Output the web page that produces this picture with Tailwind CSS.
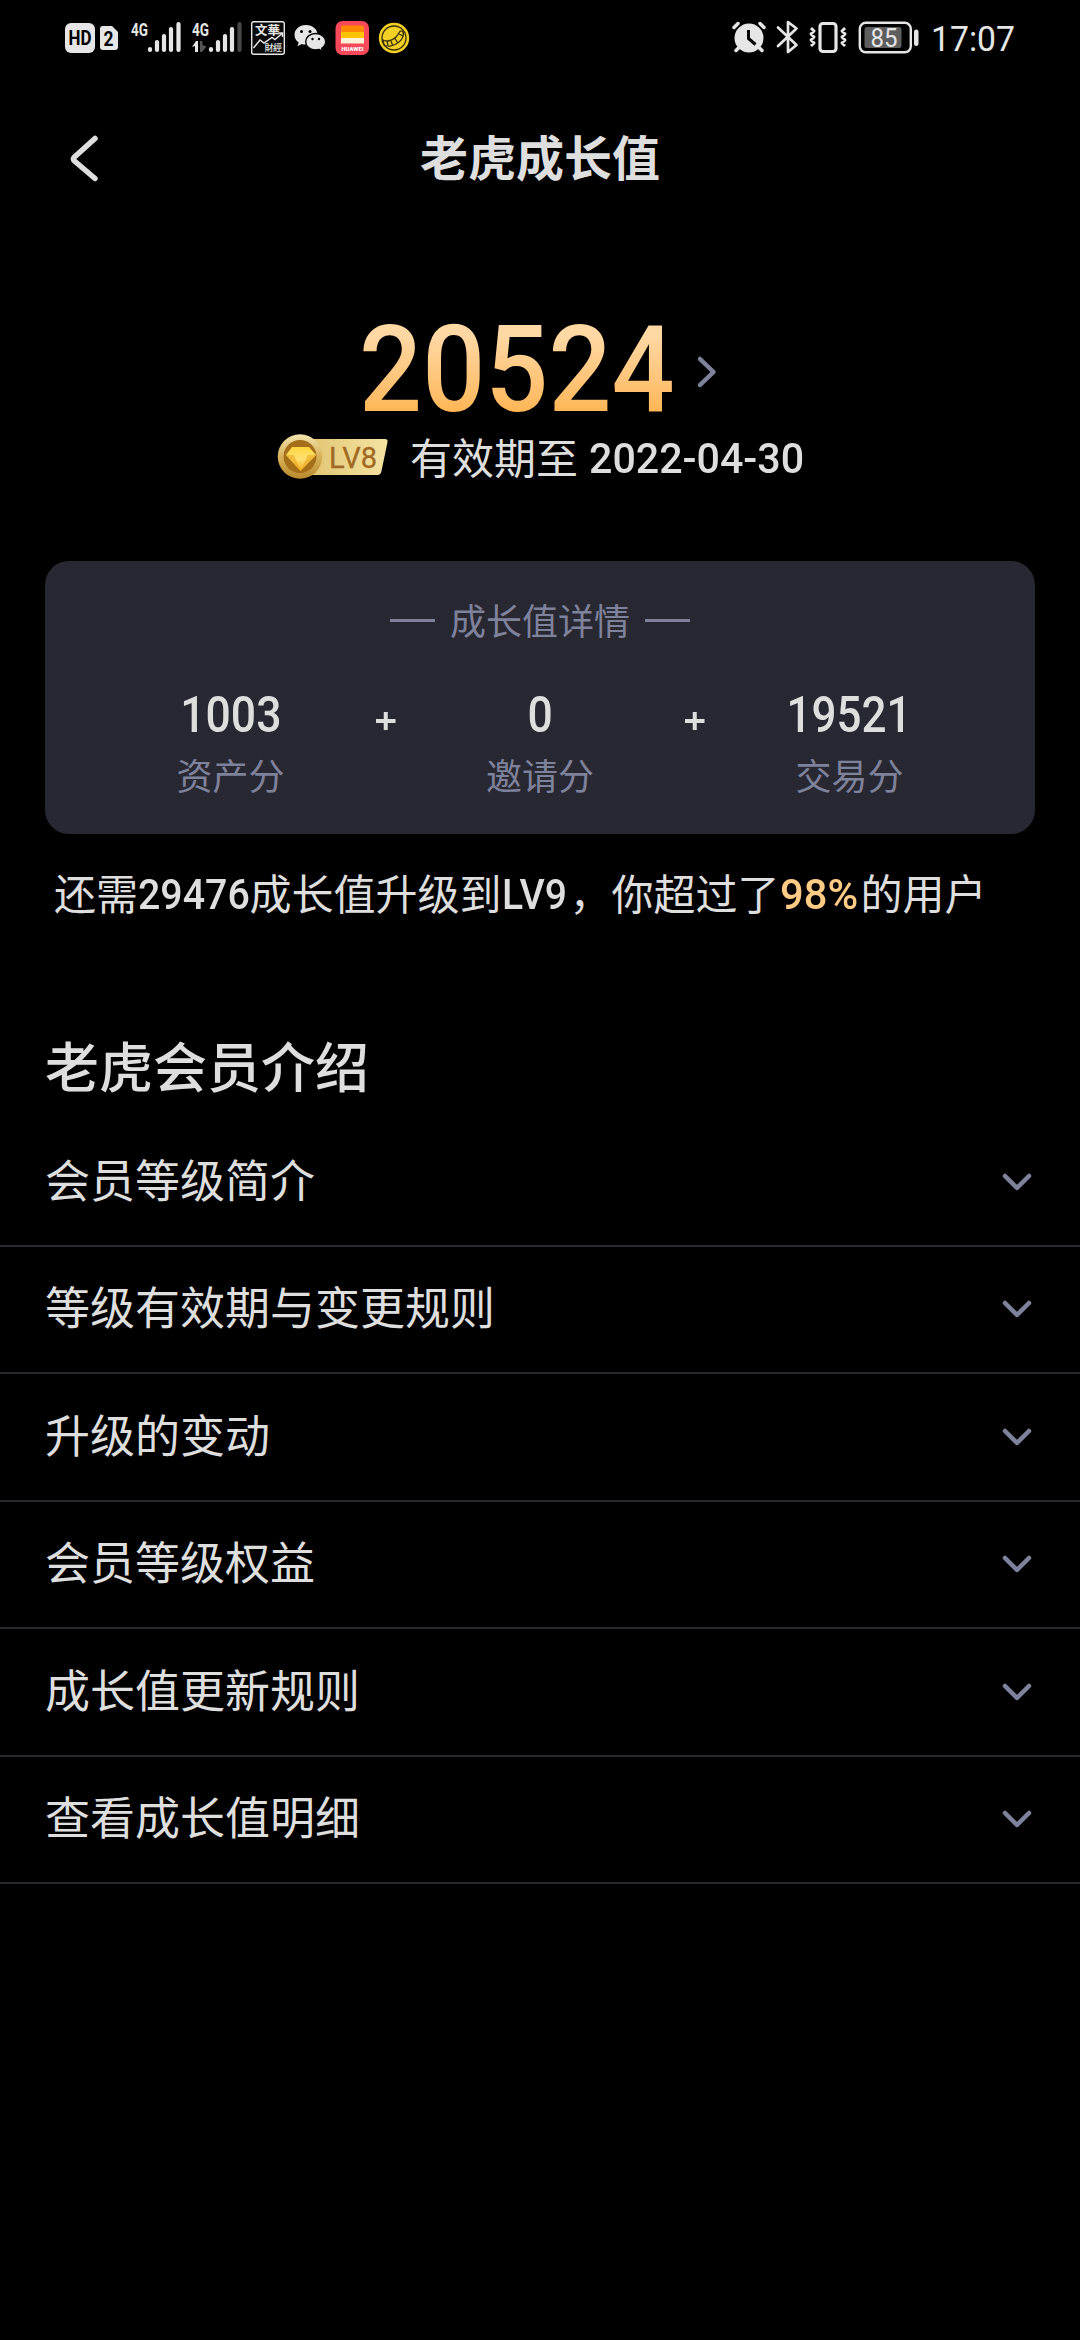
<!DOCTYPE html>
<html lang="zh-CN">
<head>
<meta charset="utf-8">
<title>老虎成长值</title>
<script src="https://cdn.jsdelivr.net/npm/@tailwindcss/browser@4"></script>
</head>
<body class="w-[1080px] h-[2340px] overflow-hidden bg-black text-[#dedede] font-['Noto_Sans_CJK_SC',sans-serif]">

<!-- status bar -->
<header class="h-[75px] flex items-center justify-between pl-[65px] pr-[56px] font-[Roboto,sans-serif]">
  <svg width="350" height="75" viewBox="65 0 350 75" fill="#e6e6e6">
    <rect x="65" y="23" width="30" height="30" rx="6"/>
    <text x="68.5" y="45" font-size="19.500" font-weight="700" fill="#000" textLength="23" lengthAdjust="spacingAndGlyphs">HD</text>
    <path d="M103 26h9l6 6v15a3 3 0 0 1-3 3h-12a3 3 0 0 1-3-3V29a3 3 0 0 1 3-3z"/>
    <text x="103.500" y="46" font-size="21" font-weight="700" fill="#000" textLength="10" lengthAdjust="spacingAndGlyphs">2</text>
    <text x="131" y="35.500" font-size="18.500" font-weight="700" textLength="17" lengthAdjust="spacingAndGlyphs">4G</text>
    <g stroke="#e6e6e6" stroke-width="4.200" stroke-linecap="round">
      <path d="M150 49v1M157 42v8M164 36v14M171 29v21M178.500 24v26"/>
      <path d="M211 49v1M218 42v8M225 36v14M232 29v21"/>
      <path d="M239.500 24v26" stroke="#484848"/>
    </g>
    <text x="192" y="35.500" font-size="18.500" font-weight="700" textLength="17" lengthAdjust="spacingAndGlyphs">4G</text>
    <path d="M192 47l4-6h2v11h-3v-6z"/><path d="M200 41h2.500v4l4 1.500-4.500 5.500h-2z" fill="#555"/>
    <rect x="251.700" y="21.700" width="32.600" height="32.600" rx="2" fill="#0a0a0a" stroke="#e6e6e6" stroke-width="1.400"/>
    <text x="255" y="34.500" font-size="12.500" font-weight="700" font-family="Noto Sans CJK TC" textLength="25">文華</text>
    <text x="264.500" y="50.500" font-size="9" font-weight="500" font-family="Noto Sans CJK TC" textLength="17.500">財經</text>
    <path d="M253.500 48l6.500-8 4 3 8-5.500 3 2 7-6M278.500 33h4v4" fill="none" stroke="#e6e6e6" stroke-width="1.500"/>
    <path d="M306 25c-7 0-11.500 4.500-11.500 10 0 3.200 1.600 5.800 4.200 7.600l-1.200 3.600 4.200-2.200c1.300.4 2.700.6 4.300.6 7 0 11.500-4.500 11.500-9.800S313 25 306 25z"/>
    <path d="M315.700 33.500c-5.700 0-10 3.600-10 8.200s4.300 8.200 10 8.200c1.200 0 2.400-.2 3.500-.5l3.400 1.900-.9-3c2.400-1.600 4-3.900 4-6.600 0-4.600-4.300-8.200-10-8.200z" stroke="#000" stroke-width="1.400"/>
    <g fill="#000"><circle cx="301.500" cy="31.500" r="1.500"/><circle cx="310" cy="31.500" r="1.500"/><circle cx="312.500" cy="39" r="1.200"/><circle cx="319" cy="39" r="1.200"/></g>
    <rect x="335.500" y="21" width="33.500" height="34" rx="7" fill="#f8495b"/>
    <path d="M341 27a1.500 1.500 0 0 1 1.500-1.500h20a1.500 1.500 0 0 1 1.500 1.500v5.500h-23z" fill="#ff8a00"/>
    <path d="M341 32h23v6h-23z" fill="#ffc300"/><path d="M341 38h23v5.500h-23z" fill="#fff1d8"/>
    <text x="341.500" y="50.500" font-size="5" font-weight="900" fill="#fff" textLength="22" lengthAdjust="spacingAndGlyphs">HUAWEI</text>
    <circle cx="394" cy="38" r="15.200" fill="#f2d024"/>
    <g fill="none" stroke="#3a310a" stroke-width="1.300"><circle cx="394" cy="38" r="12"/>
      <path d="M383 40c3 2 9 1 13-3 3-3 3-7 6-6 3 2 1 8-3 11-5 4-11 5-15 3zM387 41l1 4M391 41l1.500 4M395 38.500l2.500 4M399 34l4 2"/></g>
  </svg>
  <svg width="292" height="75" viewBox="732 0 292 75" fill="#e6e6e6">
    <circle cx="749" cy="38" r="14.500"/>
    <path d="M738.500 48l-2.500 2.500M759.500 48l2.500 2.500M734 27.500l4-4M764 27.500l-4-4" stroke="#e6e6e6" stroke-width="3.500" stroke-linecap="round"/>
    <path d="M748.500 30v8.500l7 6" fill="none" stroke="#000" stroke-width="3"/>
    <path d="M778 27.500l18.500 17.500-8.500 7v-30l8.500 6.500-18.500 17.500" fill="none" stroke="#e6e6e6" stroke-width="2.700" stroke-linecap="round" stroke-linejoin="round"/>
    <rect x="820" y="23.500" width="16" height="28" rx="3" fill="none" stroke="#e6e6e6" stroke-width="3.200"/>
    <path d="M811 28l3 3-3 3 3 3-3 3 3 3-3 3M845 28l-3 3 3 3-3 3 3 3-3 3 3 3" fill="none" stroke="#e6e6e6" stroke-width="3" stroke-linejoin="round"/>
    <rect x="859.800" y="22.800" width="51" height="29.500" rx="6" fill="none" stroke="#e6e6e6" stroke-width="2.400"/>
    <rect x="864.500" y="27" width="37" height="21" rx="2.500" fill="#5e5e5e"/>
    <text x="870.500" y="46.500" font-size="26" font-weight="400" textLength="27" lengthAdjust="spacingAndGlyphs">85</text>
    <rect x="914" y="29.500" width="4.500" height="16.500" rx="2.200"/>
    <text x="931" y="51.200" font-size="35.500" textLength="84" lengthAdjust="spacingAndGlyphs">17:07</text>
  </svg>
</header>

<!-- navigation -->
<nav class="relative h-[168px] flex justify-center items-start pt-[45px]">
  <svg class="absolute left-[64px] top-[57px]" width="40" height="54" viewBox="64 132 40 54" fill="none" stroke="#dedede" stroke-width="5.500" stroke-linecap="round" stroke-linejoin="round"><path d="M95 138.500L74.500 157q-2 2 0 4L95 178.500"/></svg>
  <h1 class="text-[48px] leading-[70px] font-bold">老虎成长值</h1>
</nav>

<!-- score -->
<section class="h-[318px] flex flex-col">
  <div class="flex items-center h-[172px] pt-[1px] pl-[359px]">
    <div class="w-[318px] h-[144px] mt-[124px]">
      <span class="inline-block origin-left scale-x-[.918] whitespace-nowrap font-[Roboto,sans-serif] font-medium text-[121px] leading-[100px] bg-linear-to-b from-[#ffd8a4] from-15% to-[#ffb757] to-90% bg-clip-text text-transparent">20524</span>
    </div>
    <svg class="mt-[85px] ml-[16px]" width="24" height="38" viewBox="0 0 24 38" fill="none" stroke="#7f829b" stroke-width="4.500" stroke-linecap="round" stroke-linejoin="round"><path d="M7 6l13.500 13L7 32"/></svg>
  </div>
  <div class="flex items-center h-[62px] pl-[276px] pt-[22px]">
    <svg width="114" height="50" viewBox="276 431 114 50">
      <defs>
        <linearGradient id="tag" x1="0" x2="1"><stop stop-color="#dfc06a"/><stop offset=".6" stop-color="#ecd78e"/><stop offset="1" stop-color="#f5e2a2"/></linearGradient>
        <linearGradient id="coin" x1="0" x2="0" y1="0" y2="1"><stop stop-color="#f3e4b0"/><stop offset=".5" stop-color="#d8b25a"/><stop offset="1" stop-color="#b98a2c"/></linearGradient>
        <linearGradient id="gem" x1="0" x2="0" y1="0" y2="1"><stop stop-color="#ffd63e"/><stop offset=".5" stop-color="#ffe173"/><stop offset="1" stop-color="#f5ad1e"/></linearGradient>
      </defs>
      <path d="M300 438h85q3 0 2.500 3l-6 29q-.8 4-4 4H300z" fill="url(#tag)"/>
      <circle cx="300" cy="455.500" r="22.300" fill="url(#coin)"/>
      <circle cx="300" cy="455.500" r="16.500" fill="#a56e18"/>
      <path d="M292 446h17l7 8-15.500 16L286 454z" fill="url(#gem)"/>
      <path d="M286 454h8l6.500 16zM308 454h8l-15.500 16z" fill="#e9a51c" opacity=".6"/>
      <text x="329" y="466.500" font-size="29.500" font-family="Roboto" fill="#a06a24" stroke="#a06a24" stroke-width=".3" textLength="48" lengthAdjust="spacingAndGlyphs">LV8</text>
    </svg>
    <span class="ml-[20px] -mt-[2px] text-[42px] leading-[50px]">有效期至</span>
    <span class="ml-[11px] mt-[3px] w-[214px] inline-block origin-left scale-x-[.98] whitespace-nowrap font-[Roboto,sans-serif] text-[42px] leading-[50px] font-medium">2022-04-30</span>
  </div>
</section>

<!-- breakdown card -->
<section class="mx-[45px] h-[273px] rounded-[24px] bg-[#282833] pt-[34px] text-[#7f829b]">
  <div class="flex items-center justify-center gap-[15px] h-[50px]">
    <i class="w-[45px] h-[3px] mt-px bg-[#7f829b]"></i>
    <span class="text-[36px] leading-[50px] -mt-[3px]">成长值详情</span>
    <i class="w-[45px] h-[3px] mt-px bg-[#7f829b]"></i>
  </div>
  <div class="flex justify-center mt-[39px] text-[36px] leading-[54px]">
    <div class="w-[200px] flex flex-col items-center">
      <b class="scale-x-[.89] font-medium font-[Roboto,sans-serif] text-[50px] leading-[63px] text-[#dedede]">1003</b><span>资产分</span>
    </div>
    <svg class="w-[109.5px] h-[80px]" viewBox="0 0 109.500 80" stroke="#dedede" stroke-width="4"><path d="M45 37h19.500M54.750 28v18"/></svg>
    <div class="w-[200px] flex flex-col items-center">
      <b class="scale-x-[.89] font-medium font-[Roboto,sans-serif] text-[50px] leading-[63px] text-[#dedede]">0</b><span>邀请分</span>
    </div>
    <svg class="w-[109.5px] h-[80px]" viewBox="0 0 109.500 80" stroke="#dedede" stroke-width="4"><path d="M45 37h19.500M54.750 28v18"/></svg>
    <div class="w-[200px] flex flex-col items-center">
      <b class="scale-x-[.88] font-medium font-[Roboto,sans-serif] text-[50px] leading-[63px] text-[#dedede]">19521</b><span>交易分</span>
    </div>
  </div>
</section>

<p class="flex pl-[54px] mt-[28px] h-[60px] text-[42px] leading-[60px] whitespace-nowrap">
  <span>还需</span><span class="mt-[2px] w-[111.5px] origin-left scale-x-[.915] font-[Roboto,sans-serif] font-medium text-[43px]">29476</span><span>成长值升级到</span><span class="mt-[2px] w-[68px] origin-left scale-x-[.91] font-[Roboto,sans-serif] font-medium text-[43px]">LV9</span><span>，你超过了</span><span class="mt-[2px] w-[81px] origin-left scale-x-[.97] font-[Roboto,sans-serif] font-medium text-[43px] text-[#ffcb85]">98%</span><span>的用户</span>
</p>

<!-- membership guide -->
<h2 class="pl-[45px] mt-[103px] h-[80px] text-[54px] leading-[80px] font-medium">老虎会员介绍</h2>
<ul class="mt-[14px] text-[45px]">
  <li class="h-[127.5px] flex items-center justify-between pl-[45px] pr-[45px] border-b-2 border-[#2a2930]"><span class="-mt-[7px]">会员等级简介</span><svg width="36" height="26" viewBox="0 0 36 26" fill="none" stroke="#7f829b" stroke-width="4.500" stroke-linecap="round" stroke-linejoin="round"><path d="M6 7l12 12L30 7"/></svg></li>
  <li class="h-[127.5px] flex items-center justify-between pl-[45px] pr-[45px] border-b-2 border-[#2a2930]"><span class="-mt-[7px]">等级有效期与变更规则</span><svg width="36" height="26" viewBox="0 0 36 26" fill="none" stroke="#7f829b" stroke-width="4.500" stroke-linecap="round" stroke-linejoin="round"><path d="M6 7l12 12L30 7"/></svg></li>
  <li class="h-[127.5px] flex items-center justify-between pl-[45px] pr-[45px] border-b-2 border-[#2a2930]"><span class="-mt-[7px]">升级的变动</span><svg width="36" height="26" viewBox="0 0 36 26" fill="none" stroke="#7f829b" stroke-width="4.500" stroke-linecap="round" stroke-linejoin="round"><path d="M6 7l12 12L30 7"/></svg></li>
  <li class="h-[127.5px] flex items-center justify-between pl-[45px] pr-[45px] border-b-2 border-[#2a2930]"><span class="-mt-[7px]">会员等级权益</span><svg width="36" height="26" viewBox="0 0 36 26" fill="none" stroke="#7f829b" stroke-width="4.500" stroke-linecap="round" stroke-linejoin="round"><path d="M6 7l12 12L30 7"/></svg></li>
  <li class="h-[127.5px] flex items-center justify-between pl-[45px] pr-[45px] border-b-2 border-[#2a2930]"><span class="-mt-[7px]">成长值更新规则</span><svg width="36" height="26" viewBox="0 0 36 26" fill="none" stroke="#7f829b" stroke-width="4.500" stroke-linecap="round" stroke-linejoin="round"><path d="M6 7l12 12L30 7"/></svg></li>
  <li class="h-[127.5px] flex items-center justify-between pl-[45px] pr-[45px] border-b-2 border-[#2a2930]"><span class="-mt-[7px]">查看成长值明细</span><svg width="36" height="26" viewBox="0 0 36 26" fill="none" stroke="#7f829b" stroke-width="4.500" stroke-linecap="round" stroke-linejoin="round"><path d="M6 7l12 12L30 7"/></svg></li>
</ul>
</body>
</html>
